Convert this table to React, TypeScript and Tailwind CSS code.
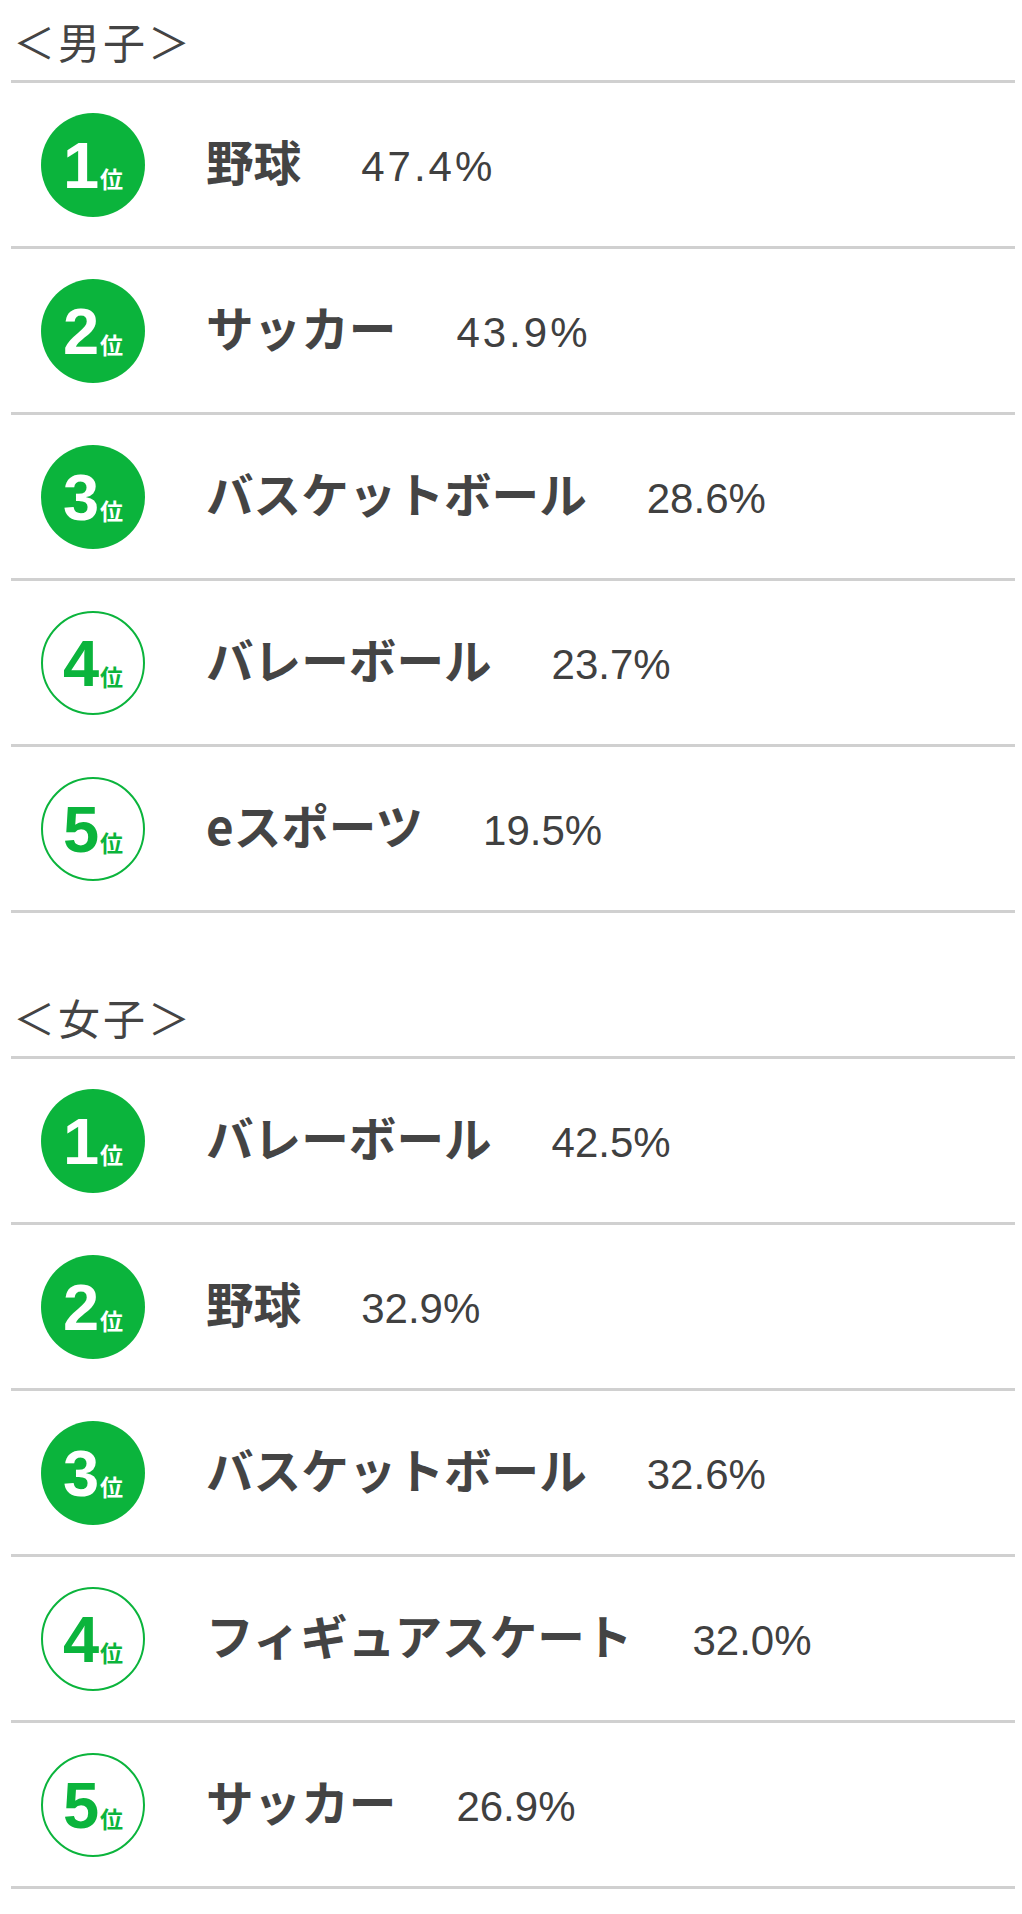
import React from "react";

type Item = { rank: number; name: string; pct: string; wide?: boolean };

const boys: Item[] = [
  { rank: 1, name: "野球", pct: "47.4%", wide: true },
  { rank: 2, name: "サッカー", pct: "43.9%", wide: true },
  { rank: 3, name: "バスケットボール", pct: "28.6%" },
  { rank: 4, name: "バレーボール", pct: "23.7%" },
  { rank: 5, name: "eスポーツ", pct: "19.5%" },
];

const girls: Item[] = [
  { rank: 1, name: "バレーボール", pct: "42.5%" },
  { rank: 2, name: "野球", pct: "32.9%" },
  { rank: 3, name: "バスケットボール", pct: "32.6%" },
  { rank: 4, name: "フィギュアスケート", pct: "32.0%" },
  { rank: 5, name: "サッカー", pct: "26.9%" },
];

const jp = "font-['Noto_Sans_CJK_JP',sans-serif]";

function RankBadge({ rank }: { rank: number }) {
  const filled = rank <= 3;
  return (
    <div
      className={
        filled
          ? "w-[104px] h-[104px] shrink-0 rounded-full bg-[#0bb43c] text-white flex items-center justify-center"
          : "w-[104px] h-[104px] shrink-0 rounded-full border-2 border-[#0bb43c] bg-white text-[#0bb43c] flex items-center justify-center"
      }
    >
      <div className="flex items-baseline font-bold mt-[2px]">
        <span className="font-['Liberation_Sans',sans-serif] text-[65px] leading-none">{rank}</span>
        <span className={`${jp} text-[23px] leading-none ml-[1px]`}>位</span>
      </div>
    </div>
  );
}

function Row({ item }: { item: Item }) {
  return (
    <div className="h-[166px] flex items-center pl-[30px] border-b-[3px] border-[#d0d0d0]">
      <RankBadge rank={item.rank} />
      <div className="flex items-baseline ml-[61px] mt-[-4px] text-[#444444]">
        <span className={`${jp} font-bold text-[47.6px] leading-none`}>{item.name}</span>
        <span
          className={
            item.wide
              ? "ml-[60px] font-['Liberation_Sans',sans-serif] text-[42px] leading-none tracking-[3px] text-[#404040]"
              : "ml-[60px] font-['Liberation_Sans',sans-serif] text-[42px] leading-none text-[#404040]"
          }
        >
          {item.pct}
        </span>
      </div>
    </div>
  );
}

function Section({ title, items, className }: { title: string; items: Item[]; className?: string }) {
  return (
    <section className={className}>
      <div className={`h-[83px] flex items-center border-b-[3px] border-[#d0d0d0] ${jp} text-[42px] tracking-[3px] text-[#444444] pl-[2px]`}>
        {title}
      </div>
      {items.map(it => (
        <Row key={it.rank} item={it} />
      ))}
    </section>
  );
}

export default function App() {
  return (
    <div className="w-[1022px] min-h-[1914px] bg-white">
      <div className="ml-[11px] w-[1004px]">
        <Section title="＜男子＞" items={boys} />
        <Section title="＜女子＞" items={girls} className="mt-[63px]" />
      </div>
    </div>
  );
}
